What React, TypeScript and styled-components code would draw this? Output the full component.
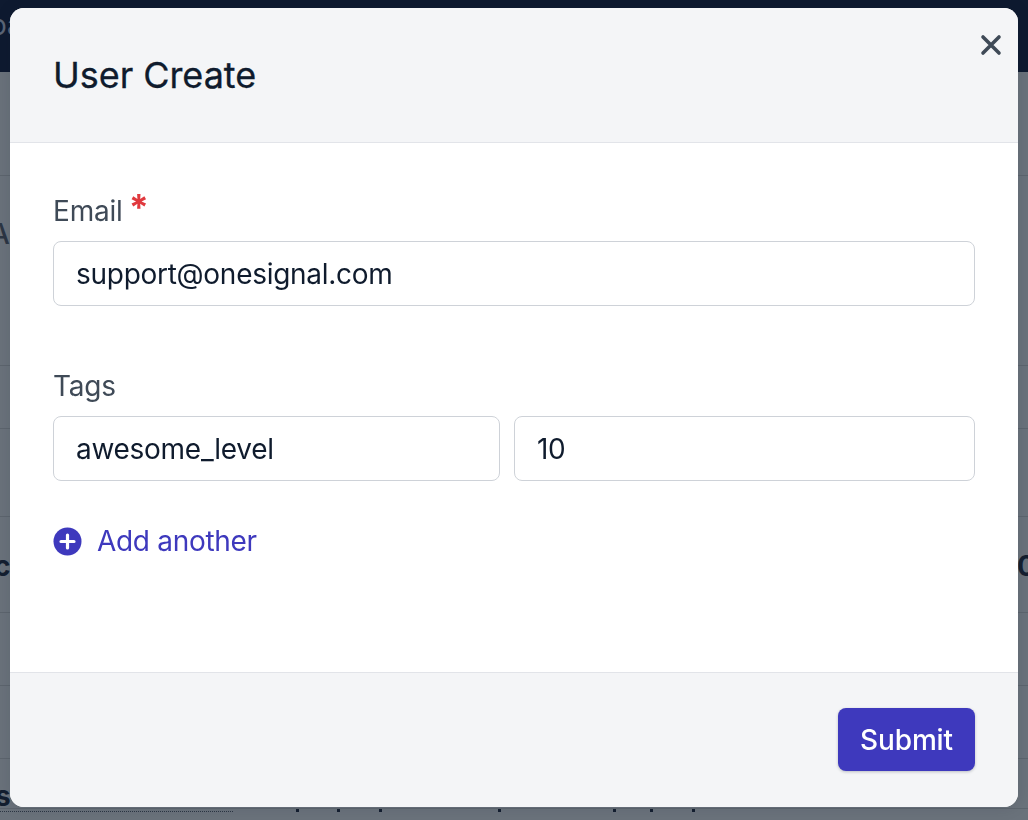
import React from "react";
import styled, { createGlobalStyle } from "styled-components";

const GlobalStyle = createGlobalStyle`
  html, body {
    margin: 0;
    height: 100%;
    overflow: hidden;
    background: #6a727b;
    font-family: Inter, "Liberation Sans", sans-serif;
  }
`;

const Page = styled.div`
  height: 820px;
  display: flex;
  flex-direction: column;
  overflow: hidden;
  background: #6a727b;
`;

const Nav = styled.div`
  height: 72px;
  flex: none;
  background: #0e1a30;
  color: #5b6576;
  font-size: 28px;
  line-height: 50px;
  text-indent: -10px;
`;

const BackRow = styled.div<{ $height: number; $pad: number }>`
  height: ${({ $height }) => $height}px;
  flex: none;
  box-sizing: border-box;
  padding-top: ${({ $pad }) => $pad}px;
  border-bottom: 1px solid #5d656e;
  display: flex;
  justify-content: space-between;
  align-items: flex-start;
  color: #141f30;
  font-size: 28px;
  line-height: 40px;
  font-weight: 700;
`;

const BackEdge = styled.span<{ $side: "left" | "right"; $bleed: number; $faded?: boolean }>`
  margin-${({ $side }) => $side}: -${({ $bleed }) => $bleed}px;
  ${({ $faded }) => ($faded ? "color: #2c3644; font-weight: 500;" : "")}
`;

const BottomStrip = styled.div`
  flex: 1;
  min-height: 0;
`;

const SpeckRow = styled.div`
  display: flex;
  height: 3px;
`;

const Speck = styled.i<{ $offset: number }>`
  width: 3px;
  height: 3px;
  margin-left: ${({ $offset }) => $offset}px;
  background: #141f30;
`;

const DottedLine = styled.div`
  width: 233px;
  margin-top: 1px;
  border-bottom: 1px dotted #2c3644;
`;

const Backdrop = styled.div`
  position: fixed;
  inset: 0;
  padding: 8px 10px 13px;
  box-sizing: border-box;
`;

const Modal = styled.div`
  position: relative;
  height: 799px;
  display: flex;
  flex-direction: column;
  background: #fff;
  border-radius: 14px;
  overflow: hidden;
  box-shadow: 0 0 16px rgba(15, 27, 45, 0.12);
`;

const Header = styled.div`
  height: 135px;
  flex: none;
  box-sizing: border-box;
  padding: 42px 43px 0;
  background: #f4f5f7;
  border-bottom: 1px solid #e2e4e9;
`;

const Title = styled.h2`
  margin: 0;
  color: #0f1b2d;
  font-size: 36px;
  line-height: 50px;
  font-weight: 400;
  letter-spacing: -0.05px;
  -webkit-text-stroke: 0.3px #0f1b2d;
`;

const Close = styled.button`
  position: absolute;
  top: 25px;
  right: 15px;
  width: 24px;
  height: 24px;
  padding: 0;
  border: 0;
  background: none;
  color: #3f4a57;
  display: flex;
  align-items: center;
  justify-content: center;
`;

const Body = styled.div`
  flex: 1;
  padding: 48px 43px 0;
`;

const Field = styled.div`
  margin-bottom: 60px;
`;

const Label = styled.label`
  display: block;
  margin-bottom: 10px;
  color: #3f4a57;
  font-size: 28px;
  line-height: 40px;
  height: 40px;
  letter-spacing: -0.2px;
`;

const Required = styled.span`
  margin-left: 6px;
  color: #e0393e;
  font-size: 36px;
  font-weight: 700;
  line-height: 0;
  position: relative;
  top: -1px;
`;

const Input = styled.input`
  display: block;
  width: 100%;
  height: 65px;
  box-sizing: border-box;
  padding: 0 22px;
  border: 1px solid #ced2d8;
  border-radius: 8px;
  outline: none;
  background: #fff;
  color: #0f1b2d;
  font: 400 28px Inter, "Liberation Sans", sans-serif;
  letter-spacing: -0.28px;
`;

const TagRow = styled.div`
  display: grid;
  grid-template-columns: 447px 461px;
  gap: 14px;
`;

const AddLink = styled.a`
  display: flex;
  align-items: center;
  gap: 15px;
  margin-top: -20px;
  color: #3e39bd;
  font-size: 28px;
  line-height: 40px;
  letter-spacing: -0.3px;
`;

const Footer = styled.div`
  height: 135px;
  flex: none;
  box-sizing: border-box;
  padding: 35px 43px 0;
  display: flex;
  justify-content: flex-end;
  align-items: flex-start;
  background: #f4f5f7;
  border-top: 1px solid #e2e4e9;
`;

const Submit = styled.button`
  width: 137px;
  height: 63px;
  border: 0;
  border-radius: 8px;
  background: #3e39bd;
  box-shadow: 0 1px 3px rgba(15, 27, 45, 0.25);
  color: #fff;
  font: 500 28px Inter, "Liberation Sans", sans-serif;
  letter-spacing: -0.15px;
`;

const rows = [
  { height: 104, pad: 0 },
  { height: 190, pad: 38, left: "A", leftBleed: 10, faded: true },
  { height: 63, pad: 0 },
  { height: 88, pad: 0 },
  { height: 96, pad: 29, left: "c", leftBleed: 6, right: "0", rightBleed: 8 },
  { height: 73, pad: 0 },
  { height: 73, pad: 0 },
];

// 모달 아래로 살짝 삐져나온 뒷 표의 글자 꼬리들
const speckGaps = [63, 38, 39, 116, 112, 34, 39];

export default function App() {
  return (
    <>
      <GlobalStyle />
      <Page>
        <Nav>oa</Nav>
        {rows.map((row, i) => (
          <BackRow key={i} $height={row.height} $pad={row.pad}>
            <BackEdge $side="left" $bleed={row.leftBleed ?? 0} $faded={row.faded}>{row.left}</BackEdge>
            <BackEdge $side="right" $bleed={row.rightBleed ?? 0}>{row.right}</BackEdge>
          </BackRow>
        ))}
        <BackRow $height={50} $pad={17}>
          <BackEdge $side="left" $bleed={5}>s</BackEdge>
        </BackRow>
        <BottomStrip>
          <SpeckRow>
            <DottedLine />
            {speckGaps.map((gap, i) => (
              <Speck key={i} $offset={gap} />
            ))}
          </SpeckRow>
        </BottomStrip>
      </Page>
      <Backdrop>
        <Modal>
          <Header>
            <Title>User Create</Title>
          </Header>
          <Close aria-label="Close">
            <svg width="24" height="24" viewBox="0 0 24 24" fill="none" stroke="currentColor" strokeWidth="3.6" strokeLinecap="round">
              <path d="M4 4l16 16M20 4L4 20" />
            </svg>
          </Close>
          <Body>
            <Field>
              <Label>
                Email<Required>*</Required>
              </Label>
              <Input readOnly value="support@onesignal.com" />
            </Field>
            <Field>
              <Label>Tags</Label>
              <TagRow>
                <Input readOnly value="awesome_level" />
                <Input readOnly value="10" />
              </TagRow>
            </Field>
            <AddLink>
              <svg width="29" height="29" viewBox="0 0 29 29">
                <circle cx="14.5" cy="14.5" r="14" fill="currentColor" />
                <path d="M14.5 8v13M8 14.5h13" stroke="#fff" strokeWidth="3.2" strokeLinecap="round" />
              </svg>
              Add another
            </AddLink>
          </Body>
          <Footer>
            <Submit>Submit</Submit>
          </Footer>
        </Modal>
      </Backdrop>
    </>
  );
}
